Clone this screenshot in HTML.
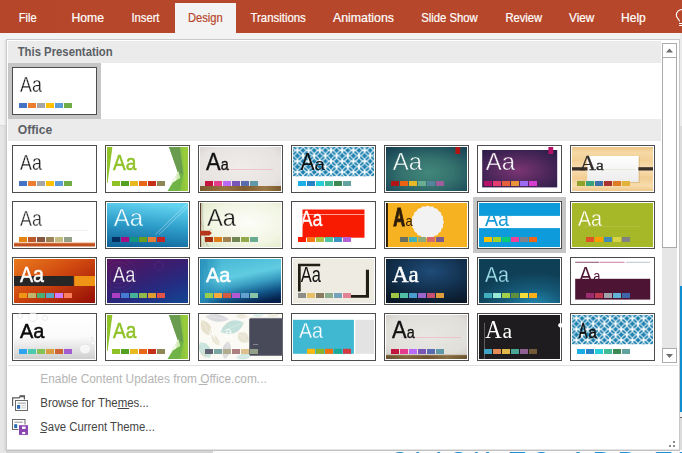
<!DOCTYPE html>
<html><head><meta charset="utf-8"><title>Themes</title>
<style>
html,body{margin:0;padding:0;background:#f3f3f3;overflow:hidden;width:682px;height:453px}
svg{display:block;position:absolute;left:0;top:0}
text{font-family:"Liberation Sans",sans-serif}
.sf{font-family:"Liberation Serif",serif}
.tc{filter:blur(0px)}
</style></head><body>
<svg width="682" height="453" viewBox="0 0 682 453">
<defs>
<linearGradient id="shL" x1="0" x2="1" y1="0" y2="0"><stop offset="0" stop-color="#f3f3f3"/><stop offset="1" stop-color="#dcdcdc"/></linearGradient>
<linearGradient id="shL2" x1="0" x2="1" y1="0" y2="0"><stop offset="0" stop-color="#e6e6e6"/><stop offset="1" stop-color="#cfcfcf"/></linearGradient>
<radialGradient id="gIon" cx="0.52" cy="0.58" r="0.8"><stop offset="0" stop-color="#41877a"/><stop offset="0.4" stop-color="#35736e"/><stop offset="0.75" stop-color="#20515d"/><stop offset="1" stop-color="#153a4b"/></radialGradient>
<radialGradient id="gIonB" cx="0.48" cy="0.55" r="0.7"><stop offset="0" stop-color="#7b3573"/><stop offset="0.6" stop-color="#4a2659"/><stop offset="1" stop-color="#2c1d49"/></radialGradient>
<radialGradient id="gOrg" cx="0.5" cy="0.45" r="0.75"><stop offset="0" stop-color="#efecea"/><stop offset="0.7" stop-color="#e7e3e1"/><stop offset="1" stop-color="#d2ccc9"/></radialGradient>
<radialGradient id="gOrg2" cx="0.5" cy="0.45" r="0.75"><stop offset="0" stop-color="#e9e7e3"/><stop offset="0.7" stop-color="#e1dfda"/><stop offset="1" stop-color="#cdc9c3"/></radialGradient>
<linearGradient id="gWood" x1="0" x2="1" y1="0" y2="0"><stop offset="0" stop-color="#7a5a30"/><stop offset="0.3" stop-color="#96733f"/><stop offset="0.55" stop-color="#7f5d31"/><stop offset="0.8" stop-color="#9b7844"/><stop offset="1" stop-color="#7a5a30"/></linearGradient>
<linearGradient id="gSlice" x1="0.3" x2="0.5" y1="1" y2="0"><stop offset="0" stop-color="#11659a"/><stop offset="0.5" stop-color="#2d9cc8"/><stop offset="1" stop-color="#62d3f0"/></linearGradient>
<radialGradient id="gWisp" cx="0.6" cy="0.45" r="0.8"><stop offset="0" stop-color="#fdfef9"/><stop offset="0.6" stop-color="#f1f5e2"/><stop offset="1" stop-color="#dde5c3"/></radialGradient>
<linearGradient id="gBerlin" x1="0" x2="1" y1="0" y2="1"><stop offset="0" stop-color="#ea7a1c"/><stop offset="0.45" stop-color="#cf4810"/><stop offset="1" stop-color="#940d05"/></linearGradient>
<linearGradient id="gCel" x1="0.1" x2="0.8" y1="0" y2="1"><stop offset="0" stop-color="#561562"/><stop offset="0.4" stop-color="#3a1e70"/><stop offset="0.7" stop-color="#252b80"/><stop offset="1" stop-color="#17408f"/></linearGradient>
<linearGradient id="gCirc" x1="0.33" y1="0" x2="0.72" y2="1"><stop offset="0" stop-color="#49b9d6"/><stop offset="0.38" stop-color="#60cce1"/><stop offset="0.58" stop-color="#3a9fc3"/><stop offset="0.8" stop-color="#12578a"/><stop offset="1" stop-color="#05204a"/></linearGradient>
<linearGradient id="gCircL" x1="0" x2="1" y1="0" y2="0"><stop offset="0" stop-color="#1f86b3" stop-opacity="0.85"/><stop offset="1" stop-color="#1f86b3" stop-opacity="0"/></linearGradient>
<radialGradient id="gDam" cx="0.55" cy="0.28" r="0.8"><stop offset="0" stop-color="#1f4c79"/><stop offset="0.55" stop-color="#12304d"/><stop offset="1" stop-color="#0a1726"/></radialGradient>
<radialGradient id="gDepth" cx="0.68" cy="1.05" r="0.75"><stop offset="0" stop-color="#2389b3"/><stop offset="0.5" stop-color="#155a78"/><stop offset="1" stop-color="#0f3f56"/></radialGradient>
<linearGradient id="gDrop" x1="0" x2="0" y1="0" y2="1"><stop offset="0" stop-color="#ffffff"/><stop offset="0.5" stop-color="#fafafa"/><stop offset="1" stop-color="#cfcfcf"/></linearGradient>
<linearGradient id="gWoodT" x1="0" x2="0" y1="0" y2="1"><stop offset="0" stop-color="#ecc384"/><stop offset="0.12" stop-color="#f6d9a6"/><stop offset="0.3" stop-color="#f3cf95"/><stop offset="0.5" stop-color="#f8dfb2"/><stop offset="0.7" stop-color="#f2cd92"/><stop offset="0.88" stop-color="#f7dcab"/><stop offset="1" stop-color="#eec78a"/></linearGradient>
<linearGradient id="gWood2" x1="0" x2="1" y1="0" y2="0"><stop offset="0" stop-color="#6a5230"/><stop offset="0.25" stop-color="#84683e"/><stop offset="0.5" stop-color="#6d5431"/><stop offset="0.75" stop-color="#8a6d42"/><stop offset="1" stop-color="#6a5230"/></linearGradient>
<linearGradient id="gCard" x1="0" x2="0" y1="0" y2="1"><stop offset="0" stop-color="#ffffff"/><stop offset="1" stop-color="#ececec"/></linearGradient>
<pattern id="pInt" x="0.8" y="5.4" width="11.2" height="10.9" patternUnits="userSpaceOnUse">
<rect width="11.2" height="10.9" fill="#197fae"/>
<g fill="none" stroke="#fff" stroke-width="1.05" stroke-opacity="0.95">
<ellipse cx="0" cy="0" rx="5.6" ry="5.45"/><ellipse cx="11.2" cy="0" rx="5.6" ry="5.45"/><ellipse cx="0" cy="10.9" rx="5.6" ry="5.45"/><ellipse cx="11.2" cy="10.9" rx="5.6" ry="5.45"/><ellipse cx="5.6" cy="5.45" rx="5.6" ry="5.45"/>
</g>
<g fill="#fff" fill-opacity="0.85"><circle cx="5.6" cy="0" r="1.45"/><circle cx="5.6" cy="10.9" r="1.45"/><circle cx="0" cy="5.45" r="1.45"/><circle cx="11.2" cy="5.45" r="1.45"/></g>
</pattern>
</defs>

<rect x="0" y="0" width="682" height="453" fill="#f3f3f3"/>
<rect x="0" y="0" width="682" height="33" fill="#b7472a"/>
<rect x="0" y="0" width="56" height="33" fill="#b5462a"/>
<rect x="175" y="3" width="61" height="30" fill="#f3f3f3"/>
<text x="18.7" y="22" font-size="12.5" fill="#ffffff" stroke="#ffffff" stroke-width="0.2" textLength="17.9" lengthAdjust="spacingAndGlyphs">File</text>
<text x="71.5" y="22" font-size="12.5" fill="#ffffff" stroke="#ffffff" stroke-width="0.2" textLength="32.5" lengthAdjust="spacingAndGlyphs">Home</text>
<text x="131.4" y="22" font-size="12.5" fill="#ffffff" stroke="#ffffff" stroke-width="0.2" textLength="28.1" lengthAdjust="spacingAndGlyphs">Insert</text>
<text x="188" y="22" font-size="12.5" fill="#b7472a" stroke="#b7472a" stroke-width="0.2" textLength="34.8" lengthAdjust="spacingAndGlyphs">Design</text>
<text x="250.5" y="22" font-size="12.5" fill="#ffffff" stroke="#ffffff" stroke-width="0.2" textLength="55.3" lengthAdjust="spacingAndGlyphs">Transitions</text>
<text x="333" y="22" font-size="12.5" fill="#ffffff" stroke="#ffffff" stroke-width="0.2" textLength="61.0" lengthAdjust="spacingAndGlyphs">Animations</text>
<text x="421.2" y="22" font-size="12.5" fill="#ffffff" stroke="#ffffff" stroke-width="0.2" textLength="56.6" lengthAdjust="spacingAndGlyphs">Slide Show</text>
<text x="505.4" y="22" font-size="12.5" fill="#ffffff" stroke="#ffffff" stroke-width="0.2" textLength="36.8" lengthAdjust="spacingAndGlyphs">Review</text>
<text x="569" y="22" font-size="12.5" fill="#ffffff" stroke="#ffffff" stroke-width="0.2" textLength="25.3" lengthAdjust="spacingAndGlyphs">View</text>
<text x="621" y="22" font-size="12.5" fill="#ffffff" stroke="#ffffff" stroke-width="0.2" textLength="24.8" lengthAdjust="spacingAndGlyphs">Help</text>
<g fill="none" stroke="#fff" stroke-width="1.1"><path d="M679.5 21.5 C679.5 19 676.3 18 676.3 15.2 A5.7 5.7 0 0 1 687.7 15.2"/><path d="M679 23.5H686M679 25.5H686"/></g>
<rect x="680" y="33" width="2" height="93" fill="#ebebeb"/><rect x="680" y="126" width="2" height="327" fill="#dcdcdc"/>
<rect x="680" y="286" width="2" height="126" fill="#0f8fd2"/>
<rect x="680" y="412" width="2" height="5" fill="#f0f0f0"/>
<rect x="680" y="417" width="2" height="1" fill="#666"/>
<rect x="0" y="125" width="7" height="328" fill="#e6e6e6"/><rect x="0" y="125" width="7" height="1" fill="#d9d9d9"/>
<rect x="3" y="40" width="4" height="85" fill="url(#shL)"/><rect x="3" y="126" width="4" height="325" fill="url(#shL2)"/>
<rect x="6" y="450" width="676" height="3" fill="#fbfbfb"/>
<rect x="6" y="450" width="207" height="3" fill="#d4d4d4"/>
<rect x="7" y="450" width="673" height="1" fill="#bdbdbd"/>
<text x="389" y="471.2" font-size="27" fill="#1e8fd0" textLength="362" lengthAdjust="spacing">CLICK TO ADD TITLE</text>
<rect x="6.5" y="39.5" width="673" height="410.5" fill="#ffffff" stroke="#c8c8c8"/>
<rect x="8" y="41" width="653" height="22" fill="#ebebeb"/>
<rect x="8" y="119" width="653" height="22" fill="#ebebeb"/>
<text x="17.7" y="55.8" font-size="12.5" font-weight="bold" fill="#5b5f66" textLength="95" lengthAdjust="spacingAndGlyphs">This Presentation</text>
<text x="17.7" y="133.8" font-size="12.5" font-weight="bold" fill="#5b5f66" textLength="34.5" lengthAdjust="spacingAndGlyphs">Office</text>
<rect x="8" y="63" width="93" height="56" fill="#c6c6c6"/>
<rect x="473" y="197" width="93" height="56" fill="#c6c6c6"/>
<rect x="662" y="43" width="15" height="320" fill="#e6e6e6"/>
<rect x="662.5" y="43.5" width="14" height="14" fill="#fff" stroke="#ababab"/>
<rect x="662.5" y="57.5" width="14" height="190" fill="#fff" stroke="#ababab"/>
<rect x="662.5" y="348.5" width="14" height="14" fill="#fff" stroke="#ababab"/>
<path d="M666 52.5L669.5 48.5L673 52.5Z" fill="#6e6e6e"/>
<path d="M666 354L673 354L669.5 358Z" fill="#6e6e6e"/>
<rect x="8" y="365" width="670" height="1" fill="#e1e1e1"/>
<g fill="#8a8a8a"><rect x="669" y="445" width="2" height="2"/><rect x="673" y="445" width="2" height="2"/><rect x="673" y="441" width="2" height="2"/></g>
<g transform="translate(12,67)">
<rect x="0.5" y="0.5" width="84" height="47" fill="#fff" stroke="#4d4d4d"/>
<svg class="tc" x="2" y="2" width="81" height="44" viewBox="2 2 81 44" overflow="hidden"><rect x="2" y="2" width="81" height="44" fill="#fff"/>
<text x="8" y="24.7" font-size="21.9" fill="#1e1e1e" textLength="21.8" lengthAdjust="spacingAndGlyphs" stroke="#fff" stroke-width="0.3">Aa</text><rect x="7" y="36" width="8" height="5" fill="#4472c4"/><rect x="16" y="36" width="8" height="5" fill="#ed7d31"/><rect x="25" y="36" width="8" height="5" fill="#a5a5a5"/><rect x="34" y="36" width="8" height="5" fill="#ffc000"/><rect x="43" y="36" width="8" height="5" fill="#5b9bd5"/><rect x="52" y="36" width="8" height="5" fill="#70ad47"/>
</svg></g>
<g transform="translate(12,145)">
<rect x="0.5" y="0.5" width="84" height="47" fill="#fff" stroke="#4d4d4d"/>
<svg class="tc" x="2" y="2" width="81" height="44" viewBox="2 2 81 44" overflow="hidden"><rect x="2" y="2" width="81" height="44" fill="#fff"/>
<text x="8" y="24.7" font-size="21.9" fill="#1e1e1e" textLength="21.8" lengthAdjust="spacingAndGlyphs" stroke="#fff" stroke-width="0.3">Aa</text><rect x="7" y="36" width="8" height="5" fill="#4472c4"/><rect x="16" y="36" width="8" height="5" fill="#ed7d31"/><rect x="25" y="36" width="8" height="5" fill="#a5a5a5"/><rect x="34" y="36" width="8" height="5" fill="#ffc000"/><rect x="43" y="36" width="8" height="5" fill="#5b9bd5"/><rect x="52" y="36" width="8" height="5" fill="#70ad47"/>
</svg></g>
<g transform="translate(105,145)">
<rect x="0.5" y="0.5" width="84" height="47" fill="#fff" stroke="#4d4d4d"/>
<svg class="tc" x="2" y="2" width="81" height="44" viewBox="2 2 81 44" overflow="hidden"><rect x="2" y="2" width="81" height="44" fill="#fff"/>
<polygon points="2,2 7.4,2 2.6,38 2,38" fill="#8fc329"/><polygon points="75,2 83,2 83,46 66,46 77,30" fill="#8cc63f"/><polygon points="64,2 75.5,2 79,30 62,46 72,46 77.5,30" fill="#5d9e3f" fill-opacity="0.0"/><polygon points="64,2 75,2 78.5,29 75,46 62.5,46 73.3,28.5" fill="#70b347"/><polygon points="64,2 75,2 78,29 73.3,28.5" fill="#6a9c50"/><polygon points="73.4,26 75.2,33 66,38.5" fill="#d3eab6"/><polygon points="72,29 71,35.5 66,38.5" fill="#eef7e2"/><polygon points="78,2 83,2 83,46 80,46" fill="#9ccc3c" fill-opacity="0.8"/><text x="8" y="24.7" font-size="21.9" fill="#8fc226" textLength="23.3" lengthAdjust="spacingAndGlyphs" stroke="#8fc226" stroke-width="0.5">Aa</text><rect x="7" y="36" width="8" height="5" fill="#90c226"/><rect x="16" y="36" width="8" height="5" fill="#54a021"/><rect x="25" y="36" width="8" height="5" fill="#e6b91e"/><rect x="34" y="36" width="8" height="5" fill="#e76618"/><rect x="43" y="36" width="8" height="5" fill="#c42f1a"/><rect x="52" y="36" width="8" height="5" fill="#918655"/>
</svg></g>
<g transform="translate(198,145)">
<rect x="0.5" y="0.5" width="84" height="47" fill="#fff" stroke="#4d4d4d"/>
<svg class="tc" x="2" y="2" width="81" height="44" viewBox="2 2 81 44" overflow="hidden"><rect x="2" y="2" width="81" height="44" fill="#fff"/>
<rect x="2" y="2" width="81" height="44" fill="url(#gOrg)"/><rect x="18" y="24" width="57" height="0.8" fill="#ebbccb"/><rect x="2" y="41" width="81" height="5" fill="url(#gWood)"/><text y="24.7" fill="#111" stroke="#111" stroke-width="0.35"><tspan x="8" font-size="23.3" textLength="14.6" lengthAdjust="spacingAndGlyphs">A</tspan><tspan x="22.7" font-size="16.1" textLength="8" lengthAdjust="spacingAndGlyphs">a</tspan></text><rect x="7" y="36" width="8" height="5" fill="#c2143d"/><rect x="16" y="36" width="8" height="5" fill="#e33d8c"/><rect x="25" y="36" width="8" height="5" fill="#b96af8"/><rect x="34" y="36" width="8" height="5" fill="#7a55b8"/><rect x="43" y="36" width="8" height="5" fill="#5a6cb0"/><rect x="52" y="36" width="8" height="5" fill="#5f98a8"/>
</svg></g>
<g transform="translate(291,145)">
<rect x="0.5" y="0.5" width="84" height="47" fill="#fff" stroke="#4d4d4d"/>
<svg class="tc" x="2" y="2" width="81" height="44" viewBox="2 2 81 44" overflow="hidden"><rect x="2" y="2" width="81" height="44" fill="#fff"/>
<rect x="2" y="2" width="81" height="29.3" fill="url(#pInt)"/><text y="24.7" fill="#111"><tspan x="9.4" font-size="24.0" textLength="14" lengthAdjust="spacingAndGlyphs">A</tspan><tspan x="23.6" font-size="16.7" textLength="10.4" lengthAdjust="spacingAndGlyphs">a</tspan></text><rect x="7" y="36" width="8" height="5" fill="#1cade4"/><rect x="16" y="36" width="8" height="5" fill="#2683c6"/><rect x="25" y="36" width="8" height="5" fill="#27ced7"/><rect x="34" y="36" width="8" height="5" fill="#42ba97"/><rect x="43" y="36" width="8" height="5" fill="#3e8853"/><rect x="52" y="36" width="8" height="5" fill="#62a39f"/>
</svg></g>
<g transform="translate(384,145)">
<rect x="0.5" y="0.5" width="84" height="47" fill="#fff" stroke="#4d4d4d"/>
<svg class="tc" x="2" y="2" width="81" height="44" viewBox="2 2 81 44" overflow="hidden"><rect x="2" y="2" width="81" height="44" fill="#fff"/>
<rect x="2" y="2" width="81" height="44" fill="url(#gIon)"/><rect x="71.4" y="2" width="4.8" height="7" fill="#b01513"/><text x="8.7" y="24.7" font-size="24.6" fill="#fff" textLength="29.3" lengthAdjust="spacingAndGlyphs" stroke="#2d6668" stroke-width="0.55">Aa</text><rect x="7" y="36" width="8" height="5" fill="#b01513"/><rect x="16" y="36" width="8" height="5" fill="#ea6312"/><rect x="25" y="36" width="8" height="5" fill="#e6b729"/><rect x="34" y="36" width="8" height="5" fill="#6aac90"/><rect x="43" y="36" width="8" height="5" fill="#54849a"/><rect x="52" y="36" width="8" height="5" fill="#9e5e9b"/>
</svg></g>
<g transform="translate(477,145)">
<rect x="0.5" y="0.5" width="84" height="47" fill="#fff" stroke="#4d4d4d"/>
<svg class="tc" x="2" y="2" width="81" height="44" viewBox="2 2 81 44" overflow="hidden"><rect x="2" y="2" width="81" height="44" fill="#fff"/>
<rect x="5.2" y="5" width="75" height="37.4" fill="url(#gIonB)"/><rect x="71.4" y="2" width="4.8" height="7" fill="#b31166"/><text x="8.7" y="24.7" font-size="24.6" fill="#fff" textLength="29.3" lengthAdjust="spacingAndGlyphs" stroke="#5c2c63" stroke-width="0.55">Aa</text><rect x="7" y="36" width="8" height="5" fill="#b31166"/><rect x="16" y="36" width="8" height="5" fill="#e33d6f"/><rect x="25" y="36" width="8" height="5" fill="#e45f3c"/><rect x="34" y="36" width="8" height="5" fill="#e9943a"/><rect x="43" y="36" width="8" height="5" fill="#9b6bf2"/><rect x="52" y="36" width="8" height="5" fill="#d53dd0"/>
</svg></g>
<g transform="translate(570,145)">
<rect x="0.5" y="0.5" width="84" height="47" fill="#fff" stroke="#4d4d4d"/>
<svg class="tc" x="2" y="2" width="81" height="44" viewBox="2 2 81 44" overflow="hidden"><rect x="2" y="2" width="81" height="44" fill="#fff"/>
<rect x="2" y="2" width="81" height="44" fill="url(#gWoodT)"/><rect x="17.8" y="11.6" width="52" height="26.4" fill="#c9a66c" fill-opacity="0.5"/><rect x="17.2" y="11" width="51.5" height="26" fill="url(#gCard)"/><rect x="2" y="22.2" width="15.5" height="3.3" fill="#3a2f2a"/><rect x="68.4" y="22.2" width="14.6" height="3.3" fill="#3a2f2a"/><rect x="30" y="24" width="36" height="0.6" fill="#dcdccf"/><text class="sf" y="24.7" fill="#2e2a28" stroke="#2e2a28" stroke-width="0.3"><tspan x="9.8" font-size="21.5" textLength="16.2" lengthAdjust="spacingAndGlyphs">A</tspan><tspan x="26" font-size="15.5" textLength="7.8" lengthAdjust="spacingAndGlyphs">a</tspan></text><rect x="7" y="36" width="8" height="5" fill="#8ea22c"/><rect x="16" y="36" width="8" height="5" fill="#3aa17e"/><rect x="25" y="36" width="8" height="5" fill="#3d6fa8"/><rect x="34" y="36" width="8" height="5" fill="#a93232"/><rect x="43" y="36" width="8" height="5" fill="#e07b25"/><rect x="52" y="36" width="8" height="5" fill="#e3b23a"/>
</svg></g>
<g transform="translate(12,201)">
<rect x="0.5" y="0.5" width="84" height="47" fill="#fff" stroke="#4d4d4d"/>
<svg class="tc" x="2" y="2" width="81" height="44" viewBox="2 2 81 44" overflow="hidden"><rect x="2" y="2" width="81" height="44" fill="#fff"/>
<rect x="10" y="29" width="66" height="0.8" fill="#f0f0f0"/><rect x="2" y="41.4" width="81" height="1" fill="#f2b083"/><rect x="2" y="42.2" width="81" height="3.3" fill="#c1521f"/><text x="8" y="24.7" font-size="21.9" fill="#333" textLength="21.8" lengthAdjust="spacingAndGlyphs" stroke="#fff" stroke-width="0.3">Aa</text><rect x="7" y="36" width="8" height="5" fill="#e48312"/><rect x="16" y="36" width="8" height="5" fill="#bd582c"/><rect x="25" y="36" width="8" height="5" fill="#865640"/><rect x="34" y="36" width="8" height="5" fill="#9b8357"/><rect x="43" y="36" width="8" height="5" fill="#c2bc80"/><rect x="52" y="36" width="8" height="5" fill="#94a088"/>
</svg></g>
<g transform="translate(105,201)">
<rect x="0.5" y="0.5" width="84" height="47" fill="#fff" stroke="#4d4d4d"/>
<svg class="tc" x="2" y="2" width="81" height="44" viewBox="2 2 81 44" overflow="hidden"><rect x="2" y="2" width="81" height="44" fill="#fff"/>
<rect x="2" y="2" width="81" height="44" fill="url(#gSlice)"/><path d="M50.3 33.5L82.8 2M54 33.5L83 5.5" stroke="#fff" stroke-opacity="0.7" stroke-width="0.5" fill="none"/><text x="8.7" y="24.7" font-size="24.2" fill="#fff" textLength="29.3" lengthAdjust="spacingAndGlyphs" stroke="#3aa9d2" stroke-width="0.55">Aa</text><rect x="7" y="36" width="8" height="5" fill="#052f61"/><rect x="16" y="36" width="8" height="5" fill="#a50e82"/><rect x="25" y="36" width="8" height="5" fill="#14967c"/><rect x="34" y="36" width="8" height="5" fill="#6a9e1f"/><rect x="43" y="36" width="8" height="5" fill="#e87d37"/><rect x="52" y="36" width="8" height="5" fill="#c62324"/>
</svg></g>
<g transform="translate(198,201)">
<rect x="0.5" y="0.5" width="84" height="47" fill="#fff" stroke="#4d4d4d"/>
<svg class="tc" x="2" y="2" width="81" height="44" viewBox="2 2 81 44" overflow="hidden"><rect x="2" y="2" width="81" height="44" fill="#fff"/>
<rect x="2" y="2" width="81" height="44" fill="url(#gWisp)"/><path d="M4.5 2C5 15 4 30 9 46M3 20C6 28 5 38 11 46M14 28C9 30 6 38 5 46" stroke="#b9b9a6" stroke-width="0.6" fill="none"/><rect x="2" y="2" width="1.2" height="44" fill="#5b3a27"/><polygon points="2,29.7 11.5,29.7 13.8,32.1 11.5,34.5 2,34.5" fill="#b5361b"/><text x="9" y="24.7" font-size="24.2" fill="#1c1c1c" textLength="29" lengthAdjust="spacingAndGlyphs" stroke="#f4f7e8" stroke-width="0.35">Aa</text><rect x="7" y="36" width="8" height="5" fill="#a53010"/><rect x="16" y="36" width="8" height="5" fill="#de7e18"/><rect x="25" y="36" width="8" height="5" fill="#9f8351"/><rect x="34" y="36" width="8" height="5" fill="#728653"/><rect x="43" y="36" width="8" height="5" fill="#92aa4c"/><rect x="52" y="36" width="8" height="5" fill="#6aac91"/>
</svg></g>
<g transform="translate(291,201)">
<rect x="0.5" y="0.5" width="84" height="47" fill="#fff" stroke="#4d4d4d"/>
<svg class="tc" x="2" y="2" width="81" height="44" viewBox="2 2 81 44" overflow="hidden"><rect x="2" y="2" width="81" height="44" fill="#fff"/>
<rect x="11.5" y="8.5" width="62" height="28.2" fill="#f81b02"/><rect x="11.5" y="13.2" width="62" height="0.7" fill="#fff" fill-opacity="0.85"/><svg x="11.5" y="8.5" width="62" height="28.2" viewBox="11.5 8.5 62 28.2" overflow="hidden"><text x="9.6" y="24.7" font-size="21.6" fill="#fff" textLength="21.8" lengthAdjust="spacingAndGlyphs" stroke="#fff" stroke-width="0.3">Aa</text></svg><rect x="7" y="36" width="8" height="5" fill="#f81b02"/><rect x="16" y="36" width="8" height="5" fill="#fc7715"/><rect x="25" y="36" width="8" height="5" fill="#afbf41"/><rect x="34" y="36" width="8" height="5" fill="#50c49f"/><rect x="43" y="36" width="8" height="5" fill="#3b95c4"/><rect x="52" y="36" width="8" height="5" fill="#b560d4"/>
</svg></g>
<g transform="translate(384,201)">
<rect x="0.5" y="0.5" width="84" height="47" fill="#fff" stroke="#4d4d4d"/>
<svg class="tc" x="2" y="2" width="81" height="44" viewBox="2 2 81 44" overflow="hidden"><rect x="2" y="2" width="81" height="44" fill="#fff"/>
<rect x="2" y="2" width="81" height="44" fill="#f6b221"/><rect x="2" y="2" width="1.9" height="44" fill="#2b1a0a"/><polygon points="59.80,21.00 59.73,21.63 59.52,22.25 59.20,22.85 58.81,23.41 59.00,24.06 59.12,24.73 59.13,25.38 59.01,26.01 58.74,26.59 58.35,27.11 57.86,27.58 57.32,27.99 57.30,28.67 57.21,29.34 57.02,29.97 56.71,30.52 56.27,30.99 55.74,31.37 55.13,31.66 54.49,31.89 54.26,32.53 53.97,33.14 53.59,33.67 53.12,34.11 52.57,34.42 51.94,34.61 51.27,34.70 50.59,34.72 50.18,35.26 49.71,35.75 49.19,36.14 48.61,36.41 47.98,36.53 47.33,36.52 46.66,36.40 46.01,36.21 45.45,36.60 44.85,36.92 44.23,37.13 43.60,37.20 42.97,37.13 42.35,36.92 41.75,36.60 41.19,36.21 40.54,36.40 39.87,36.52 39.22,36.53 38.59,36.41 38.01,36.14 37.49,35.75 37.02,35.26 36.61,34.72 35.93,34.70 35.26,34.61 34.63,34.42 34.08,34.11 33.61,33.67 33.23,33.14 32.94,32.53 32.71,31.89 32.07,31.66 31.46,31.37 30.93,30.99 30.49,30.52 30.18,29.97 29.99,29.34 29.90,28.67 29.88,27.99 29.34,27.58 28.85,27.11 28.46,26.59 28.19,26.01 28.07,25.38 28.08,24.73 28.20,24.06 28.39,23.41 28.00,22.85 27.68,22.25 27.47,21.63 27.40,21.00 27.47,20.37 27.68,19.75 28.00,19.15 28.39,18.59 28.20,17.94 28.08,17.27 28.07,16.62 28.19,15.99 28.46,15.41 28.85,14.89 29.34,14.42 29.88,14.01 29.90,13.33 29.99,12.66 30.18,12.03 30.49,11.48 30.93,11.01 31.46,10.63 32.07,10.34 32.71,10.11 32.94,9.47 33.23,8.86 33.61,8.33 34.08,7.89 34.63,7.58 35.26,7.39 35.93,7.30 36.61,7.28 37.02,6.74 37.49,6.25 38.01,5.86 38.59,5.59 39.22,5.47 39.87,5.48 40.54,5.60 41.19,5.79 41.75,5.40 42.35,5.08 42.97,4.87 43.60,4.80 44.23,4.87 44.85,5.08 45.45,5.40 46.01,5.79 46.66,5.60 47.33,5.48 47.98,5.47 48.61,5.59 49.19,5.86 49.71,6.25 50.18,6.74 50.59,7.28 51.27,7.30 51.94,7.39 52.57,7.58 53.12,7.89 53.59,8.33 53.97,8.86 54.26,9.47 54.49,10.11 55.13,10.34 55.74,10.63 56.27,11.01 56.71,11.48 57.02,12.03 57.21,12.66 57.30,13.33 57.32,14.01 57.86,14.42 58.35,14.89 58.74,15.41 59.01,15.99 59.13,16.62 59.12,17.27 59.00,17.94 58.81,18.59 59.20,19.15 59.52,19.75 59.73,20.37" fill="#f2f2f2"/><text x="9.2" y="24.7" font-size="25.2" font-weight="bold" fill="#2e1c08" textLength="11.8" lengthAdjust="spacingAndGlyphs" stroke="#2e1c08" stroke-width="1.1">A</text><text x="21.5" y="24.7" font-size="14.5" fill="#2e1c08" textLength="7.2" lengthAdjust="spacingAndGlyphs">a</text><rect x="16" y="36" width="8" height="5" fill="#6b6f5e"/><rect x="25" y="36" width="8" height="5" fill="#3fb3b9"/><rect x="34" y="36" width="8" height="5" fill="#8dab7b"/><rect x="43" y="36" width="8" height="5" fill="#d66a6a"/><rect x="52" y="36" width="8" height="5" fill="#7d5c8c"/>
</svg></g>
<g transform="translate(477,201)">
<rect x="0.5" y="0.5" width="84" height="47" fill="#fff" stroke="#4d4d4d"/>
<svg class="tc" x="2" y="2" width="81" height="44" viewBox="2 2 81 44" overflow="hidden"><rect x="2" y="2" width="81" height="44" fill="#fff"/>
<rect x="2" y="2" width="81" height="44" fill="#0d9bdb"/><rect x="2" y="14.9" width="81" height="12.2" fill="#fff"/><svg x="2" y="14.7" width="81" height="12.4" viewBox="2 14.7 81 12.4" overflow="hidden"><text x="8" y="24.7" font-size="22.3" fill="#1a9ad6" textLength="24" lengthAdjust="spacingAndGlyphs">Aa</text></svg><rect x="7" y="36" width="8" height="5" fill="#ffc000"/><rect x="16" y="36" width="8" height="5" fill="#a5d028"/><rect x="25" y="36" width="8" height="5" fill="#08cc78"/><rect x="34" y="36" width="8" height="5" fill="#f24099"/><rect x="43" y="36" width="8" height="5" fill="#828288"/><rect x="52" y="36" width="8" height="5" fill="#f56617"/>
</svg></g>
<g transform="translate(570,201)">
<rect x="0.5" y="0.5" width="84" height="47" fill="#fff" stroke="#4d4d4d"/>
<svg class="tc" x="2" y="2" width="81" height="44" viewBox="2 2 81 44" overflow="hidden"><rect x="2" y="2" width="81" height="44" fill="#fff"/>
<rect x="2" y="2" width="81" height="44" fill="#a6b727"/><rect x="14" y="25.2" width="56" height="0.6" fill="#b7c54e"/><text x="8" y="24.7" font-size="21.9" fill="#fff" textLength="24" lengthAdjust="spacingAndGlyphs" stroke="#a6b727" stroke-width="0.3">Aa</text><rect x="16" y="36" width="8" height="5" fill="#df5327"/><rect x="25" y="36" width="8" height="5" fill="#fe9e00"/><rect x="34" y="36" width="8" height="5" fill="#418ab3"/><rect x="43" y="36" width="8" height="5" fill="#d7d447"/><rect x="52" y="36" width="8" height="5" fill="#818183"/>
</svg></g>
<g transform="translate(12,257)">
<rect x="0.5" y="0.5" width="84" height="47" fill="#fff" stroke="#4d4d4d"/>
<svg class="tc" x="2" y="2" width="81" height="44" viewBox="2 2 81 44" overflow="hidden"><rect x="2" y="2" width="81" height="44" fill="#fff"/>
<rect x="2" y="2" width="81" height="44" fill="url(#gBerlin)"/><rect x="2" y="19" width="59.7" height="10" fill="#262626"/><rect x="62.3" y="19" width="20.7" height="10" fill="#f09415"/><text x="8" y="24.7" font-size="22.6" fill="#fff" textLength="24" lengthAdjust="spacingAndGlyphs" stroke="#fff" stroke-width="0.45">Aa</text><rect x="7" y="36" width="8" height="5" fill="#f09415"/><rect x="16" y="36" width="8" height="5" fill="#c1b56b"/><rect x="25" y="36" width="8" height="5" fill="#4baf73"/><rect x="34" y="36" width="8" height="5" fill="#5aa6c0"/><rect x="43" y="36" width="8" height="5" fill="#d17df9"/><rect x="52" y="36" width="8" height="5" fill="#fa7e5c"/>
</svg></g>
<g transform="translate(105,257)">
<rect x="0.5" y="0.5" width="84" height="47" fill="#fff" stroke="#4d4d4d"/>
<svg class="tc" x="2" y="2" width="81" height="44" viewBox="2 2 81 44" overflow="hidden"><rect x="2" y="2" width="81" height="44" fill="#fff"/>
<rect x="2" y="2" width="81" height="44" fill="url(#gCel)"/><g fill="none" stroke="#fff" stroke-opacity="0.08" stroke-width="0.7"><circle cx="14" cy="18" r="13"/><circle cx="14" cy="18" r="9"/><circle cx="14" cy="18" r="17"/><circle cx="54" cy="9" r="4.5"/></g><text x="8" y="24.7" font-size="21.9" fill="#fff" textLength="22.3" lengthAdjust="spacingAndGlyphs" stroke="#41206f" stroke-width="0.3">Aa</text><rect x="7" y="36" width="8" height="5" fill="#ac3ec1"/><rect x="16" y="36" width="8" height="5" fill="#477bd1"/><rect x="25" y="36" width="8" height="5" fill="#46b298"/><rect x="34" y="36" width="8" height="5" fill="#90ba4c"/><rect x="43" y="36" width="8" height="5" fill="#dd9d31"/><rect x="52" y="36" width="8" height="5" fill="#e25247"/>
</svg></g>
<g transform="translate(198,257)">
<rect x="0.5" y="0.5" width="84" height="47" fill="#fff" stroke="#4d4d4d"/>
<svg class="tc" x="2" y="2" width="81" height="44" viewBox="2 2 81 44" overflow="hidden"><rect x="2" y="2" width="81" height="44" fill="#fff"/>
<rect x="2" y="2" width="81" height="44" fill="url(#gCirc)"/><rect x="2" y="2" width="22" height="44" fill="url(#gCircL)"/><path d="M4 2V46M6.5 10V46M9 25V46M11 2V14" stroke="#6fd0ea" stroke-opacity="0.3" stroke-width="0.6"/><text x="8" y="24.7" font-size="20.8" fill="#fff" textLength="24.4" lengthAdjust="spacingAndGlyphs" stroke="#fff" stroke-width="0.5">Aa</text><rect x="7" y="36" width="8" height="5" fill="#9acd4c"/><rect x="16" y="36" width="8" height="5" fill="#faa93a"/><rect x="25" y="36" width="8" height="5" fill="#d35940"/><rect x="34" y="36" width="8" height="5" fill="#b258d3"/><rect x="43" y="36" width="8" height="5" fill="#63a0cc"/><rect x="52" y="36" width="8" height="5" fill="#8ac4a7"/>
</svg></g>
<g transform="translate(291,257)">
<rect x="0.5" y="0.5" width="84" height="47" fill="#fff" stroke="#4d4d4d"/>
<svg class="tc" x="2" y="2" width="81" height="44" viewBox="2 2 81 44" overflow="hidden"><rect x="2" y="2" width="81" height="44" fill="#fff"/>
<rect x="2" y="2" width="81" height="44" fill="#eeebe2"/><path d="M7 6.8H29.2V9.2H9.7V34.5H7Z" fill="#1f1f14"/><path d="M74.9 12.7H78V40.8H60V38H74.9Z" fill="#1f1f14"/><text x="9.7" y="24.7" font-size="21.5" fill="#111" textLength="20.1" lengthAdjust="spacingAndGlyphs">Aa</text><rect x="7" y="36" width="8" height="5" fill="#8c8d86"/><rect x="16" y="36" width="8" height="5" fill="#e6c069"/><rect x="25" y="36" width="8" height="5" fill="#897b61"/><rect x="34" y="36" width="8" height="5" fill="#8dab8e"/><rect x="43" y="36" width="8" height="5" fill="#77a2bb"/><rect x="52" y="36" width="8" height="5" fill="#e28394"/>
</svg></g>
<g transform="translate(384,257)">
<rect x="0.5" y="0.5" width="84" height="47" fill="#fff" stroke="#4d4d4d"/>
<svg class="tc" x="2" y="2" width="81" height="44" viewBox="2 2 81 44" overflow="hidden"><rect x="2" y="2" width="81" height="44" fill="#fff"/>
<rect x="2" y="2" width="81" height="44" fill="url(#gDam)"/><text class="sf" x="8" y="24.7" font-size="23.8" fill="#fff" textLength="26.8" lengthAdjust="spacingAndGlyphs" stroke="#fff" stroke-width="0.45">Aa</text><rect x="7" y="36" width="8" height="5" fill="#9ec544"/><rect x="16" y="36" width="8" height="5" fill="#50bea3"/><rect x="25" y="36" width="8" height="5" fill="#4a9ccc"/><rect x="34" y="36" width="8" height="5" fill="#9a66ca"/><rect x="43" y="36" width="8" height="5" fill="#c54f71"/><rect x="52" y="36" width="8" height="5" fill="#de9c3c"/>
</svg></g>
<g transform="translate(477,257)">
<rect x="0.5" y="0.5" width="84" height="47" fill="#fff" stroke="#4d4d4d"/>
<svg class="tc" x="2" y="2" width="81" height="44" viewBox="2 2 81 44" overflow="hidden"><rect x="2" y="2" width="81" height="44" fill="#fff"/>
<rect x="2" y="2" width="81" height="44" fill="url(#gDepth)"/><text x="8" y="24.7" font-size="21.9" fill="#a4e0ea" textLength="24" lengthAdjust="spacingAndGlyphs" stroke="#124a63" stroke-width="0.3">Aa</text><rect x="7" y="36" width="8" height="5" fill="#41aebd"/><rect x="16" y="36" width="8" height="5" fill="#97e9d5"/><rect x="25" y="36" width="8" height="5" fill="#a2cf49"/><rect x="34" y="36" width="8" height="5" fill="#608f3d"/><rect x="43" y="36" width="8" height="5" fill="#f4de3a"/><rect x="52" y="36" width="8" height="5" fill="#fcb11c"/>
</svg></g>
<g transform="translate(570,257)">
<rect x="0.5" y="0.5" width="84" height="47" fill="#fff" stroke="#4d4d4d"/>
<svg class="tc" x="2" y="2" width="81" height="44" viewBox="2 2 81 44" overflow="hidden"><rect x="2" y="2" width="81" height="44" fill="#fff"/>
<rect x="5.2" y="4.8" width="24" height="0.9" fill="#7d3c5f"/><rect x="29.8" y="4.8" width="24.8" height="0.9" fill="#c9719c"/><rect x="55.9" y="4.8" width="24.2" height="0.9" fill="#b3bec6"/><text y="24.7" fill="#4d1434"><tspan x="9" font-size="22.6" textLength="13.2" lengthAdjust="spacingAndGlyphs">A</tspan><tspan x="23.3" font-size="16.5" textLength="7.2" lengthAdjust="spacingAndGlyphs">a</tspan></text><rect x="5.2" y="21.8" width="75" height="20.8" fill="#4d1434"/><rect x="16" y="36" width="8" height="5" fill="#9b2d6e"/><rect x="25" y="36" width="8" height="5" fill="#c13a52"/><rect x="34" y="36" width="8" height="5" fill="#a0a4ab"/><rect x="43" y="36" width="8" height="5" fill="#5fb5d5"/><rect x="52" y="36" width="8" height="5" fill="#3f66ab"/>
</svg></g>
<g transform="translate(12,313)">
<rect x="0.5" y="0.5" width="84" height="47" fill="#fff" stroke="#4d4d4d"/>
<svg class="tc" x="2" y="2" width="81" height="44" viewBox="2 2 81 44" overflow="hidden"><rect x="2" y="2" width="81" height="44" fill="#fff"/>
<rect x="2" y="2" width="81" height="44" fill="url(#gDrop)"/><g fill="#fff" fill-opacity="0.7" stroke="#d2d2d2" stroke-opacity="0.8" stroke-width="0.5"><circle cx="21" cy="4" r="4.5"/><circle cx="33" cy="5" r="2.6"/><circle cx="8" cy="3" r="2.5"/><ellipse cx="73" cy="36" rx="5.5" ry="4.8"/><circle cx="81" cy="30" r="2"/><circle cx="64" cy="34" r="1.2"/><circle cx="80" cy="25" r="1"/></g><text x="8" y="24.7" font-size="20.8" fill="#0a0a0a" textLength="24.4" lengthAdjust="spacingAndGlyphs" stroke="#0a0a0a" stroke-width="0.5">Aa</text><rect x="7" y="36" width="8" height="5" fill="#2fa3ee"/><rect x="16" y="36" width="8" height="5" fill="#4bcaad"/><rect x="25" y="36" width="8" height="5" fill="#86c157"/><rect x="34" y="36" width="8" height="5" fill="#d99c3f"/><rect x="43" y="36" width="8" height="5" fill="#ce6633"/><rect x="52" y="36" width="8" height="5" fill="#a35dd1"/>
</svg></g>
<g transform="translate(105,313)">
<rect x="0.5" y="0.5" width="84" height="47" fill="#fff" stroke="#4d4d4d"/>
<svg class="tc" x="2" y="2" width="81" height="44" viewBox="2 2 81 44" overflow="hidden"><rect x="2" y="2" width="81" height="44" fill="#fff"/>
<polygon points="2,2 7.4,2 2.6,38 2,38" fill="#8fc329"/><polygon points="75,2 83,2 83,46 66,46 77,30" fill="#8cc63f"/><polygon points="64,2 75.5,2 79,30 62,46 72,46 77.5,30" fill="#5d9e3f" fill-opacity="0.0"/><polygon points="64,2 75,2 78.5,29 75,46 62.5,46 73.3,28.5" fill="#70b347"/><polygon points="64,2 75,2 78,29 73.3,28.5" fill="#6a9c50"/><polygon points="73.4,26 75.2,33 66,38.5" fill="#d3eab6"/><polygon points="72,29 71,35.5 66,38.5" fill="#eef7e2"/><polygon points="78,2 83,2 83,46 80,46" fill="#9ccc3c" fill-opacity="0.8"/><text x="8" y="24.7" font-size="21.9" fill="#8fc226" textLength="23.3" lengthAdjust="spacingAndGlyphs" stroke="#8fc226" stroke-width="0.5">Aa</text><rect x="7" y="36" width="8" height="5" fill="#90c226"/><rect x="16" y="36" width="8" height="5" fill="#54a021"/><rect x="25" y="36" width="8" height="5" fill="#e6b91e"/><rect x="34" y="36" width="8" height="5" fill="#e76618"/><rect x="43" y="36" width="8" height="5" fill="#c42f1a"/><rect x="52" y="36" width="8" height="5" fill="#918655"/>
</svg></g>
<g transform="translate(198,313)">
<rect x="0.5" y="0.5" width="84" height="47" fill="#fff" stroke="#4d4d4d"/>
<svg class="tc" x="2" y="2" width="81" height="44" viewBox="2 2 81 44" overflow="hidden"><rect x="2" y="2" width="81" height="44" fill="#fff"/>
<rect x="2" y="2" width="81" height="44" fill="#fbfaf4"/><path d="M22.5 19.0Q39.0 26.1 46.0 9.5Q29.5 2.4 22.5 19.0Z" fill="#9ccfc7" fill-opacity="0.6"/><path d="M22.5 19.0L46.0 9.5" stroke="#fff" stroke-opacity="0.7" stroke-width="0.4"/><path d="M13.0 23.0Q16.3 10.2 3.5 7.0Q0.2 19.8 13.0 23.0Z" fill="#d8d0b3" fill-opacity="0.6"/><path d="M13.0 23.0L3.5 7.0" stroke="#fff" stroke-opacity="0.7" stroke-width="0.4"/><path d="M13.5 21.0Q12.5 30.3 21.5 33.0Q22.5 23.7 13.5 21.0Z" fill="#d8d0b3" fill-opacity="0.45"/><path d="M13.5 21.0L21.5 33.0" stroke="#fff" stroke-opacity="0.7" stroke-width="0.4"/><path d="M7.0 3.2Q18.0 12.4 31.0 6.5Q20.0 -2.7 7.0 3.2Z" fill="#bfbecb" fill-opacity="0.55"/><path d="M7.0 3.2L31.0 6.5" stroke="#fff" stroke-opacity="0.7" stroke-width="0.4"/><path d="M12.0 45.0Q16.4 31.1 2.0 29.0Q-2.4 42.9 12.0 45.0Z" fill="#9ccfc7" fill-opacity="0.55"/><path d="M12.0 45.0L2.0 29.0" stroke="#fff" stroke-opacity="0.7" stroke-width="0.4"/><path d="M26.5 46.0Q36.8 38.8 30.5 28.0Q20.2 35.2 26.5 46.0Z" fill="#bfbecb" fill-opacity="0.55"/><path d="M26.5 46.0L30.5 28.0" stroke="#fff" stroke-opacity="0.7" stroke-width="0.4"/><path d="M50.5 29.0Q51.9 16.8 40.0 20.0Q38.6 32.2 50.5 29.0Z" fill="#d8d0b3" fill-opacity="0.5"/><path d="M50.5 29.0L40.0 20.0" stroke="#fff" stroke-opacity="0.7" stroke-width="0.4"/><path d="M38.0 45.0Q47.1 49.3 54.0 42.0Q44.9 37.7 38.0 45.0Z" fill="#9ccfc7" fill-opacity="0.45"/><path d="M38.0 45.0L54.0 42.0" stroke="#fff" stroke-opacity="0.7" stroke-width="0.4"/><path d="M37.0 3.0Q43.3 7.5 50.0 3.5Q43.7 -1.0 37.0 3.0Z" fill="#d8d0b3" fill-opacity="0.45"/><path d="M37.0 3.0L50.0 3.5" stroke="#fff" stroke-opacity="0.7" stroke-width="0.4"/><path d="M54.0 2.5Q60.1 5.6 66.0 2.0Q59.9 -1.1 54.0 2.5Z" fill="#9ccfc7" fill-opacity="0.35"/><path d="M54.0 2.5L66.0 2.0" stroke="#fff" stroke-opacity="0.7" stroke-width="0.4"/><path d="M68.0 2.5Q75.1 5.6 82.0 2.0Q74.9 -1.1 68.0 2.5Z" fill="#d8d0b3" fill-opacity="0.4"/><path d="M68.0 2.5L82.0 2.0" stroke="#fff" stroke-opacity="0.7" stroke-width="0.4"/><path d="M3.0 36.0Q1.7 42.9 8.0 46.0Q9.3 39.1 3.0 36.0Z" fill="#d8d0b3" fill-opacity="0.3"/><path d="M3.0 36.0L8.0 46.0" stroke="#fff" stroke-opacity="0.7" stroke-width="0.4"/><rect x="51.5" y="5.4" width="33" height="37" rx="1.2" fill="#494a59" stroke="#6d6e7c" stroke-width="0.9"/><rect x="55" y="31" width="5.2" height="0.7" fill="#9a9ba6"/><text y="24.7" fill="#fff" fill-opacity="0.75"><tspan x="10" font-size="13.8" textLength="7" lengthAdjust="spacingAndGlyphs">A</tspan><tspan x="26.5" font-size="16.4" textLength="8" lengthAdjust="spacingAndGlyphs">a</tspan></text><rect x="7" y="36" width="8" height="5" fill="#606372"/><rect x="16" y="36" width="8" height="5" fill="#79a8a4"/><rect x="25" y="36" width="8" height="5" fill="#b2ad8f"/><rect x="34" y="36" width="8" height="5" fill="#ad8082"/><rect x="43" y="36" width="8" height="5" fill="#dec18c"/><rect x="52" y="36" width="8" height="5" fill="#92a185"/>
</svg></g>
<g transform="translate(291,313)">
<rect x="0.5" y="0.5" width="84" height="47" fill="#fff" stroke="#4d4d4d"/>
<svg class="tc" x="2" y="2" width="81" height="44" viewBox="2 2 81 44" overflow="hidden"><rect x="2" y="2" width="81" height="44" fill="#fff"/>
<rect x="2" y="6.8" width="60.9" height="34" fill="#40b8d2"/><rect x="64.3" y="6.8" width="18.7" height="34" fill="#e3e3e3"/><text x="8" y="24.7" font-size="21.9" fill="#fff" textLength="24" lengthAdjust="spacingAndGlyphs" stroke="#40b8d2" stroke-width="0.3">Aa</text><rect x="16" y="35.8" width="8" height="5" fill="#fcb90a"/><rect x="25" y="35.8" width="8" height="5" fill="#8cb428"/><rect x="34" y="35.8" width="8" height="5" fill="#f07010"/><rect x="43" y="35.8" width="8" height="5" fill="#1aab98"/><rect x="52" y="35.8" width="8" height="5" fill="#d43a44"/>
</svg></g>
<g transform="translate(384,313)">
<rect x="0.5" y="0.5" width="84" height="47" fill="#fff" stroke="#4d4d4d"/>
<svg class="tc" x="2" y="2" width="81" height="44" viewBox="2 2 81 44" overflow="hidden"><rect x="2" y="2" width="81" height="44" fill="#fff"/>
<rect x="2" y="2" width="81" height="44" fill="url(#gOrg2)"/><rect x="17" y="24" width="60" height="0.8" fill="#ebbccb"/><rect x="2" y="41.6" width="81" height="0.8" fill="#b9a58a"/><rect x="2" y="42.2" width="81" height="3.8" fill="url(#gWood2)"/><text y="24.7" fill="#111" stroke="#111" stroke-width="0.35"><tspan x="8" font-size="23.3" textLength="14.6" lengthAdjust="spacingAndGlyphs">A</tspan><tspan x="22.7" font-size="16.1" textLength="8" lengthAdjust="spacingAndGlyphs">a</tspan></text><rect x="7" y="36" width="8" height="5" fill="#c2143d"/><rect x="16" y="36" width="8" height="5" fill="#e33d8c"/><rect x="25" y="36" width="8" height="5" fill="#b96af8"/><rect x="34" y="36" width="8" height="5" fill="#7a55b8"/><rect x="43" y="36" width="8" height="5" fill="#5a6cb0"/><rect x="52" y="36" width="8" height="5" fill="#5f98a8"/>
</svg></g>
<g transform="translate(477,313)">
<rect x="0.5" y="0.5" width="84" height="47" fill="#fff" stroke="#4d4d4d"/>
<svg class="tc" x="2" y="2" width="81" height="44" viewBox="2 2 81 44" overflow="hidden"><rect x="2" y="2" width="81" height="44" fill="#fff"/>
<rect x="2" y="2" width="81" height="44" fill="#1e1c1e"/><rect x="7.3" y="9.8" width="0.6" height="36.2" fill="#8a8a8a"/><circle cx="83.6" cy="12.3" r="2.4" fill="#fff"/><text class="sf" y="24.7" fill="#fff"><tspan x="8.2" font-size="25.5" textLength="16.5" lengthAdjust="spacingAndGlyphs">A</tspan><tspan x="25.6" font-size="20" textLength="9.6" lengthAdjust="spacingAndGlyphs">a</tspan></text><rect x="7" y="36" width="8" height="5" fill="#3ea3c4"/><rect x="16" y="36" width="8" height="5" fill="#e48c56"/><rect x="25" y="36" width="8" height="5" fill="#dfb849"/><rect x="34" y="36" width="8" height="5" fill="#48a795"/><rect x="43" y="36" width="8" height="5" fill="#8f5f94"/><rect x="52" y="36" width="8" height="5" fill="#725a36"/>
</svg></g>
<g transform="translate(570,313)">
<rect x="0.5" y="0.5" width="84" height="47" fill="#fff" stroke="#4d4d4d"/>
<svg class="tc" x="2" y="2" width="81" height="44" viewBox="2 2 81 44" overflow="hidden"><rect x="2" y="2" width="81" height="44" fill="#fff"/>
<rect x="2" y="2" width="81" height="29.3" fill="url(#pInt)"/><text y="24.7" fill="#111" stroke="#111" stroke-width="0.5"><tspan x="8.7" font-size="21.5" textLength="8.6" lengthAdjust="spacingAndGlyphs">A</tspan><tspan x="18.4" font-size="16.7" textLength="8.3" lengthAdjust="spacingAndGlyphs">a</tspan></text><rect x="7" y="36" width="8" height="5" fill="#1cade4"/><rect x="16" y="36" width="8" height="5" fill="#2683c6"/><rect x="25" y="36" width="8" height="5" fill="#27ced7"/><rect x="34" y="36" width="8" height="5" fill="#42ba97"/><rect x="43" y="36" width="8" height="5" fill="#3e8853"/><rect x="52" y="36" width="8" height="5" fill="#62a39f"/>
</svg></g>
<text x="40.3" y="383" font-size="12.5" fill="#b4b4b4" textLength="226.5" lengthAdjust="spacingAndGlyphs">Enable Content Updates from Office.com...</text>
<text x="40.3" y="407" font-size="12.5" fill="#444" textLength="108.5" lengthAdjust="spacingAndGlyphs">Browse for Themes...</text>
<text x="40.3" y="431" font-size="12.5" fill="#444" textLength="114.5" lengthAdjust="spacingAndGlyphs">Save Current Theme...</text>
<g fill="#b4b4b4"><rect x="198.6" y="384" width="8.8" height="1"/></g><g fill="#444"><rect x="117.6" y="408" width="11.6" height="1"/><rect x="40.2" y="432" width="6.4" height="1"/></g>
<path d="M12.6 406V397.9H19.2L20.2 396.2H24.4V399.5" fill="none" stroke="#5e5e5e" stroke-width="1.2"/><rect x="19.8" y="395.3" width="5.2" height="2" fill="#5e5e5e"/>
<rect x="15.5" y="400.5" width="12" height="10" fill="#fff" stroke="#6a6a6a"/><rect x="17.5" y="402.5" width="8.3" height="1.4" fill="#b5b5b5"/><rect x="17" y="405" width="3.2" height="3.8" fill="#2b6cb5"/><rect x="21.3" y="405.3" width="4.6" height="0.8" fill="#b5b5b5"/><rect x="21.3" y="407.5" width="4.6" height="0.8" fill="#b5b5b5"/>
<rect x="12.5" y="419.5" width="12.5" height="10" fill="#fff" stroke="#6a6a6a"/><rect x="14.5" y="421.5" width="8.3" height="1.5" fill="#b5b5b5"/><rect x="14.2" y="424.2" width="3" height="3.9" fill="#2b6cb5"/>
<rect x="18.5" y="424.5" width="10" height="10.8" fill="#fff"/><rect x="19" y="425.2" width="9" height="9.7" fill="#8a47b0"/><rect x="22" y="426.6" width="3.6" height="2.3" fill="#fff"/><rect x="22.2" y="432" width="3" height="2" fill="#fff"/>
</svg></body></html>
